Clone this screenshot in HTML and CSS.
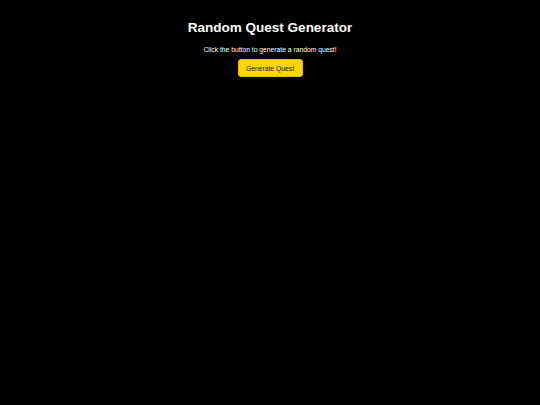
FILE: index.html
```html
<!DOCTYPE html>
<html lang="en">
<head>
<meta charset="utf-8">
<title>Random Quest Generator</title>
<link rel="stylesheet" href="styles.css">
</head>
<body>
<main class="app">
  <h1 class="title">Random Quest Generator</h1>
  <p class="subtitle">Click the button to generate a random quest!</p>
  <button class="generate" type="button">Generate Quest</button>
  <div class="quest"></div>
</main>
</body>
</html>
```
FILE: styles.css
```css
html, body {
  margin: 0;
  padding: 0;
  background: #000;
  height: 100%;
}
body {
  font-family: "Liberation Sans", Arial, sans-serif;
  color: #fff;
}
.app {
  display: flex;
  flex-direction: column;
  align-items: center;
  padding-top: 20px;
}
.title {
  margin: 0;
  font-size: 13.5px;
  line-height: 16px;
  font-weight: bold;
}
.subtitle {
  margin: 10px 0 0;
  font-size: 6.75px;
  line-height: 8px;
}
.generate {
  margin-top: 5px;
  width: 65px;
  height: 18px;
  padding: 0;
  background: #ffd700;
  color: #111;
  border: 1px solid #e0b800;
  border-radius: 3px;
  font-family: "Liberation Sans", Arial, sans-serif;
  font-size: 6.75px;
}
```
